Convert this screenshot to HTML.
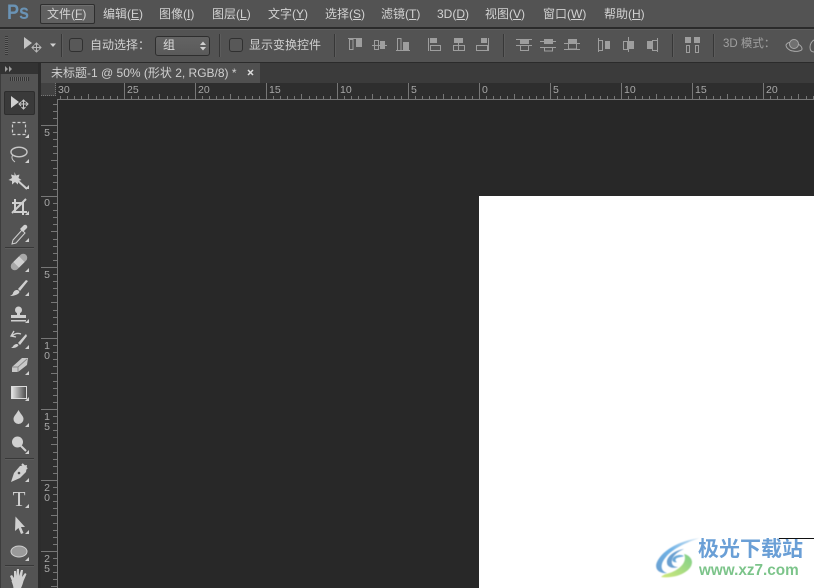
<!DOCTYPE html>
<html><head><meta charset="utf-8"><style>
*{margin:0;padding:0;box-sizing:border-box}
html,body{width:814px;height:588px;overflow:hidden;background:#282828}
body{position:relative;font-family:"Liberation Sans","Noto Sans CJK SC",sans-serif;color:#d4d4d4}
.a{position:absolute}
.m{position:absolute;top:6px;font-size:12px;line-height:16px;color:#d2d2d2;white-space:nowrap}
.m u{text-underline-offset:1px}
.rt{position:absolute;top:85px;font-size:10.500px;line-height:11px;color:#a8a8a8}
.rl{position:absolute;left:43px;width:8px;font-size:10.500px;line-height:10px;color:#a8a8a8;text-align:center}
.sep{position:absolute;width:1px;background:#373737;box-shadow:1px 0 0 #5c5c5c}
.cb{position:absolute;width:14px;height:14px;top:38px;background:#585858;border:1px solid #303030;border-radius:3px}
.tsep{position:absolute;left:5px;width:29px;height:1px;background:#383838;box-shadow:0 1px 0 #5c5c5c}
svg{position:absolute;overflow:visible}
</style></head><body>
<!-- menu -->
<div class="a" style="left:0;top:0;width:814px;height:27px;background:#535353"></div>
<div class="a" style="left:0;top:27px;width:814px;height:2px;background:#2b2b2b"></div>
<div class="a" style="left:7px;top:0;font-size:21px;line-height:26px;font-weight:bold;color:#6a93b5;transform:scaleX(.86);transform-origin:0 0">Ps</div>
<div class="a" style="left:40px;top:4px;width:55px;height:20px;background:#606060;border:1px solid #2e2e2e;border-radius:2px;box-shadow:inset 0 1px 0 #707070"></div>
<div class="m" style="left:47px">文件(<u>F</u>)</div>
<div class="m" style="left:103px">编辑(<u>E</u>)</div>
<div class="m" style="left:159px">图像(<u>I</u>)</div>
<div class="m" style="left:212px">图层(<u>L</u>)</div>
<div class="m" style="left:268px">文字(<u>Y</u>)</div>
<div class="m" style="left:325px">选择(<u>S</u>)</div>
<div class="m" style="left:381px">滤镜(<u>T</u>)</div>
<div class="m" style="left:437px">3D(<u>D</u>)</div>
<div class="m" style="left:485px">视图(<u>V</u>)</div>
<div class="m" style="left:543px">窗口(<u>W</u>)</div>
<div class="m" style="left:604px">帮助(<u>H</u>)</div>
<!-- options -->
<div class="a" style="left:0;top:29px;width:814px;height:33px;background:#535353;box-shadow:inset 0 1px 0 #5e5e5e"></div>
<div class="a" style="left:0;top:62px;width:814px;height:1px;background:#2b2b2b"></div>
<div class="a" style="left:5px;top:36px;width:3px;height:19px;background:repeating-linear-gradient(#383838 0 1px,#666 1px 2px)"></div>
<svg style="left:0;top:0" width="814" height="62" fill="none">
<path d="M24 37v12l8-6z" fill="#c4c4c4"/>
<path d="M32 47.500h9M36.500 43v9M34.500 45l2-2 2 2M34.500 50l2 2 2-2M34 45.500l-2 2 2 2M39 45.500l2 2-2 2" stroke="#b8b8b8"/>
<path d="M50 43.500h6l-3 3.500z" fill="#d0d0d0"/>
<g stroke="#9e9e9e">
<path d="M348 38.500h14M349.500 39.500h3.500v10h-3.500z"/>
<path d="M372 45.500h15M374.500 40.500h4v9h-4z"/>
<path d="M396 50.500h14M397.500 38.500h3.500v12h-3.500z"/>
<path d="M428.500 38v13M430.500 45.500h10v5h-10z"/>
<path d="M458.500 38v13M453.500 45.500h11v5h-11z"/>
<path d="M488.500 38v13M476.500 45.500h11v5h-11z"/>
<path d="M516 39.500h16M516 45.500h16M520.500 46v4.500h8v-4.500"/>
<path d="M540 41.500h16M540 47.500h16M544.500 48v3h8v-3"/>
<path d="M564 43.500h16M564 49.500h16M568.500 44v5h8v-5"/>
<path d="M598.500 38v14M598.500 40.500h4v10h-4z"/>
<path d="M628.500 37v15M623.500 41.500h4v8h-4z"/>
<path d="M657.500 38v14M652.500 40.500h5v10h-5z"/>
<path d="M686.500 45.500h3v7h-3zM695.500 45.500h3v7h-3z"/>
</g>
<g fill="#9e9e9e">
<rect x="356" y="39" width="6" height="8"/><rect x="380" y="41" width="5" height="8"/><rect x="403" y="42" width="6" height="8"/>
<rect x="430" y="38" width="7" height="5"/><rect x="454" y="38" width="9" height="5"/><rect x="481" y="38" width="6" height="5"/>
<rect x="520" y="40" width="9" height="4"/><rect x="544" y="39" width="9" height="5"/><rect x="568" y="39" width="9" height="4"/>
<rect x="605" y="41" width="5" height="8"/><rect x="629" y="41" width="5" height="8"/><rect x="647" y="41" width="5" height="8"/>
<rect x="685" y="37" width="6" height="6"/><rect x="694" y="37" width="6" height="6"/>
</g>
<path d="M786 45c2-4 8-3 9-1 3-1 7 2 7 5 0 2-6 3-9 2-3 0-7-3-7-6z" stroke="#a8a8a8"/><circle cx="794" cy="44" r="4.500" stroke="#a8a8a8" fill="#707070"/>
<path d="M814 52c-3 0-4-2-4-5 0-3 2-6 4-7" stroke="#a8a8a8"/>
</svg>
<div class="sep" style="left:61px;top:34px;height:23px"></div>
<div class="cb" style="left:69px"></div>
<div class="a" style="left:90px;top:37px;font-size:12px;line-height:16px;color:#d0d0d0;white-space:nowrap">自动选择：</div>
<div class="a" style="left:155px;top:36px;width:55px;height:20px;background:linear-gradient(#636363,#5a5a5a);border:1px solid #2e2e2e;border-radius:3px"></div>
<div class="a" style="left:163px;top:37px;font-size:12px;line-height:16px;color:#dcdcdc">组</div>
<svg style="left:0;top:0" width="814" height="62"><path d="M200 45l3-3.500 3 3.500zM200 47l3 3.500 3-3.500z" fill="#d0d0d0"/></svg>
<div class="sep" style="left:219px;top:34px;height:23px"></div>
<div class="cb" style="left:229px"></div>
<div class="a" style="left:249px;top:37px;font-size:12px;line-height:16px;color:#d0d0d0;white-space:nowrap">显示变换控件</div>
<div class="sep" style="left:334px;top:34px;height:23px"></div>
<div class="sep" style="left:503px;top:34px;height:23px"></div>
<div class="sep" style="left:672px;top:34px;height:23px"></div>
<div class="sep" style="left:713px;top:34px;height:23px"></div>
<div class="a" style="left:723px;top:36px;font-size:11.500px;line-height:16px;color:#a0a0a0;white-space:nowrap">3D 模式：</div>
<!-- tab strip -->
<div class="a" style="left:0;top:63px;width:814px;height:20px;background:#3b3b3b"></div>
<div class="a" style="left:0;top:63px;width:38px;height:11px;background:#333"></div>
<div class="a" style="left:41px;top:63px;width:219px;height:20px;background:#505050"></div>
<div class="a" style="left:51px;top:65px;font-size:12px;line-height:16px;color:#d0d0d0;white-space:nowrap">未标题-1 @ 50% (形状 2, RGB/8) *</div>
<svg style="left:0;top:0" width="814" height="90"><path d="M248 70l5 5M253 70l-5 5" stroke="#dcdcdc" stroke-width="1.500"/><path d="M5 66l3 3-3 3zM9 66l3 3-3 3z" fill="#a0a0a0"/></svg>
<!-- toolbar -->
<div class="a" style="left:0;top:74px;width:38px;height:514px;background:#535353;border-left:1px solid #3c3c3c"></div>
<div class="a" style="left:38px;top:63px;width:3px;height:525px;background:#2c2c2c"></div>
<div class="a" style="left:10px;top:77px;width:19px;height:4px;background:repeating-linear-gradient(90deg,#333 0 1px,#666 1px 2px)"></div>
<div class="a" style="left:4px;top:91px;width:31px;height:24px;background:#3a3a3a;border:1px solid #2e2e2e;border-radius:2px"></div>
<div class="tsep" style="top:247px"></div><div class="tsep" style="top:458px"></div><div class="tsep" style="top:565px"></div>
<!-- rulers -->
<div class="a" style="left:41px;top:83px;width:773px;height:17px;background:#2e2e2e"></div>
<div class="a" style="left:41px;top:83px;width:17px;height:505px;background:#2e2e2e"></div>
<svg style="left:0;top:0" width="814" height="588" shape-rendering="crispEdges">
<defs>
<pattern id="px" patternUnits="userSpaceOnUse" x="53" y="83" width="71" height="17">
<path d="M.5 0v16M7.500 13v3M14.500 13v3M21.500 13v3M28.500 13v3M35.500 11v5M43.500 13v3M50.500 13v3M57.500 13v3M64.500 13v3" stroke="#777" fill="none"/>
</pattern>
<pattern id="py" patternUnits="userSpaceOnUse" x="41" y="54" width="17" height="71">
<path d="M0 .5h16M12 7.500h4M12 14.500h4M12 21.500h4M12 28.500h4M10 35.500h6M12 43.500h4M12 50.500h4M12 57.500h4M12 64.500h4" stroke="#777" fill="none"/>
</pattern>
</defs>
<rect x="57" y="83" width="757" height="16" fill="url(#px)"/>
<rect x="41" y="99" width="16" height="489" fill="url(#py)"/>
<rect x="57" y="99" width="757" height="1" fill="#777"/>
<rect x="57" y="99" width="1" height="489" fill="#777"/>
</svg>
<div class="a" style="left:41px;top:83px;width:15px;height:13px;background:#424242;border-right:1px dotted #777;border-bottom:1px dotted #777"></div>
<div class="rt" style="left:58px">30</div><div class="rt" style="left:127px">25</div><div class="rt" style="left:198px">20</div><div class="rt" style="left:269px">15</div><div class="rt" style="left:340px">10</div><div class="rt" style="left:411px">5</div><div class="rt" style="left:482px">0</div><div class="rt" style="left:553px">5</div><div class="rt" style="left:624px">10</div><div class="rt" style="left:695px">15</div><div class="rt" style="left:766px">20</div>
<div class="rl" style="top:128px">5</div><div class="rl" style="top:198px">0</div><div class="rl" style="top:270px">5</div>
<div class="rl" style="top:341px">1<br>0</div><div class="rl" style="top:412px">1<br>5</div><div class="rl" style="top:483px">2<br>0</div><div class="rl" style="top:554px">2<br>5</div>
<!-- canvas -->
<div class="a" style="left:58px;top:100px;width:756px;height:488px;background:#282828"></div>
<div class="a" style="left:479px;top:196px;width:335px;height:392px;background:#fff"></div>
<!-- tools -->
<svg style="left:0;top:0" width="38" height="588" fill="none">
<path d="M11 96v12l8-6z" fill="#d0d0d0"/><path d="M19 104h9M23.500 100v9M21.500 102l2-2 2 2M21.500 107l2 2 2-2M21 102l-2 2 2 2M26 102l2 2-2 2" stroke="#c8c8c8"/>
<rect x="12.500" y="122.500" width="13" height="12" stroke="#d0d0d0" stroke-width="1.200" stroke-dasharray="3 2"/>
<ellipse cx="19" cy="152" rx="8" ry="4.800" stroke="#c8c8c8" stroke-width="1.400"/><path d="M13 155c-2 2-1 5 2 7" stroke="#c8c8c8"/>
<path d="M17 180l10 9" stroke="#d0d0d0" stroke-width="2"/><path d="M14.500 172l1.500 3.500 3.500-1-1 3.500 3 2-3.500 1 0 3.500-3-2.500-3 2.500 0-3.500-3.500-1 3.500-2-1-3.500 3.500 1z" fill="#d0d0d0"/>
<path d="M15 199v13h12M12 203h11v12M26 199l-14 14" stroke="#d0d0d0" stroke-width="2"/>
<path d="M13 240l9-10 3 3-9 10-4 1z" fill="#5a5a5a" stroke="#d0d0d0"/><path d="M20 229l4-4c2-1 4 1 3 3l-4 4z" fill="#d0d0d0"/>
<g transform="rotate(-45 19 262)"><rect x="9" y="258" width="20" height="8" rx="4" fill="#a8a8a8"/><rect x="15" y="258" width="8" height="8" fill="#d0d0d0"/></g>
<path d="M26 280l2 1-8 10-2-2zM17 290c2 0 3 2 2 3-2 2-6 3-9 3 2-1 3-2 3-3 1-2 2-3 4-3z" fill="#d0d0d0"/>
<circle cx="18.500" cy="310" r="3.500" fill="#d0d0d0"/><path d="M17 313h3v2h6v3H11v-3h6zM11 320h15v1.500H11z" fill="#d0d0d0"/>
<path d="M12 336c3-3 6-3 9-2M14 331l-3 5 5 1" stroke="#d0d0d0" stroke-width="1.300"/><path d="M26 334l1 2-7 9-2-2zM16 344c2 0 3 1 2 2-2 2-4 2-7 2 2-1 2-2 3-3z" fill="#d0d0d0"/>
<path d="M12 367l10-9h6l-1 7-9 7h-6z" fill="#c8c8c8"/><path d="M12 367h6l9-8M18 367v5" stroke="#8a8a8a"/>
<rect x="11.500" y="386.500" width="15" height="12" fill="url(#g)" stroke="#dcdcdc"/>
<path d="M18.500 410c2 4 5 6 5 9a5 5 0 0 1-10 0c0-3 3-5 5-9z" fill="#d0d0d0"/>
<circle cx="17.500" cy="442" r="5.500" fill="#d0d0d0"/><path d="M21 446l5 5" stroke="#d0d0d0" stroke-width="2"/>
<path d="M27 465l-7 1-6 7-3 9 9-4 6-6z" fill="#d0d0d0"/><path d="M22 464l5 5" stroke="#d0d0d0" stroke-width="2"/><circle cx="19" cy="473" r="1.300" fill="#535353"/>
<path d="M15.500 516.500L25 527h-4l2.500 6-2.500 1-2.500-6-3.500 3z" fill="#d0d0d0"/>
<ellipse cx="19" cy="551.500" rx="8" ry="5.500" fill="#9a9a9a" stroke="#d0d0d0"/>
<path d="M12 581l-2-5 2-1 2 3v-7h2v5l1-7h2l0 7 2-6h2l-1 7 3-4 1.500 1-3 7c-1 4-2 6-3 8h-7c0-3-1-5-2-8z" fill="#d0d0d0"/>
<g fill="#d0d0d0"><path d="M29 134v4h-4zM29 159v4h-4zM29 185v4h-4zM29 211v4h-4zM29 238v4h-4zM29 268v4h-4zM29 292v4h-4zM29 319v4h-4zM29 345v4h-4zM29 371v4h-4zM29 397v4h-4zM29 423v4h-4zM29 450v4h-4zM29 478v4h-4zM29 504v4h-4zM29 530v4h-4zM29 557v4h-4z"/></g>
<defs><linearGradient id="g"><stop offset="0" stop-color="#e8e8e8"/><stop offset="1" stop-color="#484848"/></linearGradient></defs>
</svg>
<div class="a" style="left:9px;top:488px;width:20px;text-align:center;font-family:'Liberation Serif',serif;font-size:21px;line-height:22px;color:#d0d0d0">T</div>
<!-- watermark -->
<svg style="left:655px;top:535px;filter:blur(.4px)" width="50" height="50" fill="none">
<defs><linearGradient id="lb" x1="1" y1="0" x2="0" y2="1"><stop offset="0" stop-color="#d8e8f5"/><stop offset=".5" stop-color="#6fb2e6"/><stop offset="1" stop-color="#6a9fd0"/></linearGradient>
<linearGradient id="lg" x1="1" y1="0" x2="0" y2="1"><stop offset="0" stop-color="#7fcf8a"/><stop offset="1" stop-color="#d0e87a"/></linearGradient></defs>
<path d="M45 3C27 5 8 14 2 27c-3 7 2 12 10 11C5 36 5 29 11 22 17 14 32 7 45 3z" fill="url(#lb)"/>
<path d="M29 14c-8 1-18 7-17 14 0 4 6 6 11 4-5 0-7-3-6-7 1-5 7-9 12-11z" fill="#6a9fd0"/>
<path d="M29 19c4 8-5 17-18 20-3 1-5 3-5 3 14 2 31-5 31-15 0-3-3-7-8-8z" fill="url(#lg)"/>
<path d="M29 21c-3-2-9-1-11 2-2 3 1 5 4 4-2-1-2-3 0-4 2-1 5-1 7-2z" fill="#6aa8d8"/>
</svg>
<div class="a" style="left:698px;top:537px;font-size:21px;line-height:26px;font-weight:bold;color:#6a9fd6;white-space:nowrap;filter:blur(.3px)">极光下载站</div>
<div class="a" style="left:699px;top:562px;font-size:15.300px;line-height:18px;font-weight:bold;color:#7cc48a;white-space:nowrap;filter:blur(.3px)">www.xz7.com</div>
<div class="a" style="left:779px;top:538px;width:35px;height:1px;background:#111"></div>
</body></html>
